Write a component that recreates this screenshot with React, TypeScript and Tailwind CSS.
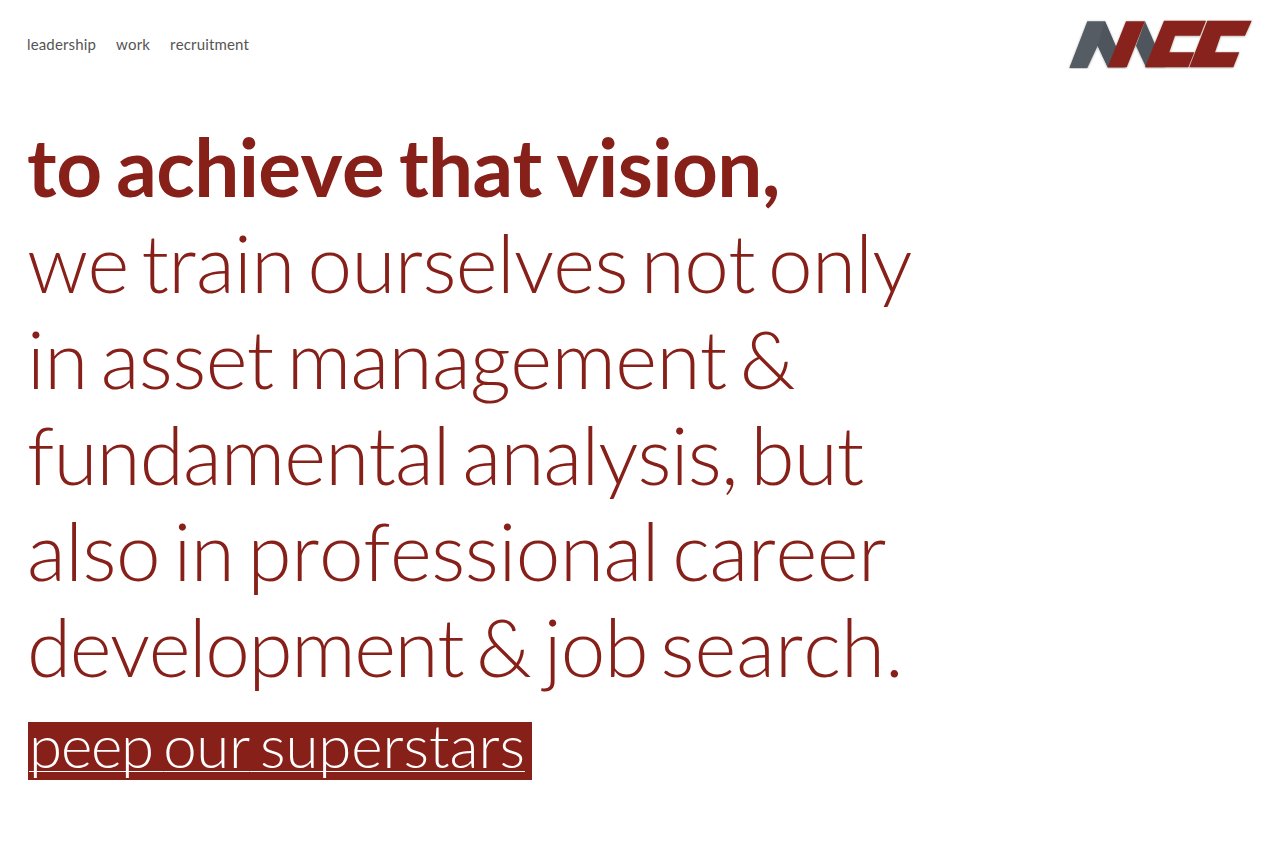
export default function App() {
  return (
    <div className="min-h-[850px] bg-white font-['Lato',sans-serif] text-[#88201a] [font-kerning:none]">
      <header className="flex items-start justify-between px-[27px] pt-[15px]">
        <nav className="flex gap-[20px] pt-[20px] text-[15px] leading-[18px] tracking-[0.15px] text-[#555555]">
          <span>leadership</span>
          <span>work</span>
          <span>recruitment</span>
        </nav>
        <svg width="186" height="50" viewBox="0 0 186 50" className="mt-[4px]">
          <defs>
            <filter id="s" x="-5%" y="-10%" width="110%" height="125%">
              <feDropShadow dx="0" dy="0.5" stdDeviation="0.8" floodColor="#000" floodOpacity="0.35" />
            </filter>
          </defs>
          <g filter="url(#s)">
            <path d="M2.3 49 L20.3 2.3 H38 L58 48.3 H40.7 L30.7 26.7 L20.3 49 Z" fill="#555b63" />
            <path d="M38 2.3 L58 48.3 H40.7 L30.7 26.7 Z" fill="#4f555d" />
            <path d="M69 26.7 L78 2.3 L98 48.3 H79 Z" fill="#4f555d" />
            <path d="M40.7 48.3 L59 2.3 H78 L59.7 48.3 Z" fill="#88201a" />
            <path d="M78 48.3 L97 1.7 H139 L133 16.7 H108 L102.3 33.3 H127.3 L121.3 48.3 Z" fill="#88201a" />
            <path d="M122.3 48.3 L140.3 1.7 H184.7 L178 16.7 H153.7 L148 33.3 H172.3 L166.3 48.3 Z" fill="#88201a" />
          </g>
        </svg>
      </header>
      <main className="pl-[27px] pt-[49px] text-[80px] leading-[96px] [word-spacing:-8px]">
        <h1 className="font-bold tracking-[-0.63px] [word-spacing:-4px]">to achieve that vision,</h1>
        <p className="font-light tracking-[-0.66px]">we train ourselves not only</p>
        <p className="font-light tracking-[-0.6px]">in asset management &amp;</p>
        <p className="font-light tracking-[-0.84px]">fundamental analysis, but</p>
        <p className="font-light tracking-[-0.46px]">also in professional career</p>
        <p className="font-light tracking-[-0.9px]">
          <span className="tracking-[-1.4px]">development</span> &amp; job <span className="tracking-[0px]">search.</span>
        </p>
        <a className="mt-[28px] ml-[1px] block w-fit bg-[#88201a] pr-[7px] pb-[12px] pl-[1px] text-[60px] leading-[46px] font-light text-white underline decoration-1 underline-offset-[3px] [text-decoration-skip-ink:none] [word-spacing:-6px]">
          <span className="tracking-[-1.2px]">peep</span> <span className="tracking-[-0.4px]">our</span> <span className="tracking-[-0.1px]">superstars</span>
        </a>
      </main>
    </div>
  );
}
